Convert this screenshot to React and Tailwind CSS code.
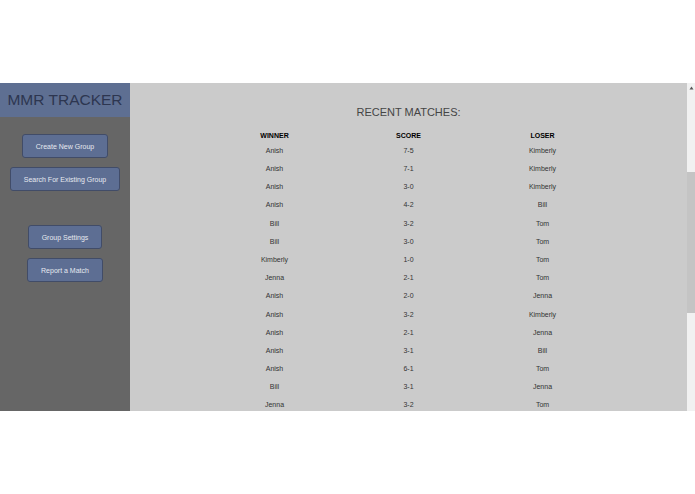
import React from "react";

const rows = [
  ["Anish", "7-5", "Kimberly"],
  ["Anish", "7-1", "Kimberly"],
  ["Anish", "3-0", "Kimberly"],
  ["Anish", "4-2", "Bill"],
  ["Bill", "3-2", "Tom"],
  ["Bill", "3-0", "Tom"],
  ["Kimberly", "1-0", "Tom"],
  ["Jenna", "2-1", "Tom"],
  ["Anish", "2-0", "Jenna"],
  ["Anish", "3-2", "Kimberly"],
  ["Anish", "2-1", "Jenna"],
  ["Anish", "3-1", "Bill"],
  ["Anish", "6-1", "Tom"],
  ["Bill", "3-1", "Jenna"],
  ["Jenna", "3-2", "Tom"],
];

function Btn({ children }) {
  return (
    <button className="h-[24px] px-[13px] rounded-[3px] border border-[#414c68] bg-[#5d6e93] text-[#e6e9f0] text-[7px] leading-none whitespace-nowrap">
      {children}
    </button>
  );
}

export default function App() {
  return (
    <div className="w-[695px] h-[494px] bg-white flex flex-col" style={{ fontFamily: '"Liberation Sans", Arial, sans-serif' }}>
      <div className="h-[83px] shrink-0" />
      <div className="h-[328px] flex shrink-0">
        <div className="w-[130px] shrink-0 bg-[#666666] flex flex-col items-center">
          <div className="w-full h-[34px] bg-[#5e6f92] flex items-center justify-center text-[15.5px] text-[#2d3650] leading-none">
            MMR TRACKER
          </div>
          <div className="mt-[17px] flex flex-col items-center gap-[9px]">
            <Btn>Create New Group</Btn>
            <Btn>Search For Existing Group</Btn>
          </div>
          <div className="mt-[34px] flex flex-col items-center gap-[9px]">
            <Btn>Group Settings</Btn>
            <Btn>Report a Match</Btn>
          </div>
        </div>
        <div className="flex-1 bg-[#cbcbcb] overflow-hidden flex flex-col items-center pt-[24px]">
          <div className="h-[14px] flex items-center text-[11px] text-[#454545] leading-none">RECENT MATCHES:</div>
          <div className="mt-[12px] grid grid-cols-[134px_134px_134px]">
            <div className="h-[12px] flex items-center justify-center text-[7px] font-bold text-black">WINNER</div>
            <div className="h-[12px] flex items-center justify-center text-[7px] font-bold text-black">SCORE</div>
            <div className="h-[12px] flex items-center justify-center text-[7px] font-bold text-black">LOSER</div>
            {rows.map((r, i) => (
              <React.Fragment key={i}>
                {r.map((c, j) => (
                  <div key={j} className="h-[18.2px] flex items-center justify-center text-[7px] text-[#333333]">
                    {c}
                  </div>
                ))}
              </React.Fragment>
            ))}
          </div>
        </div>
        <div className="w-[8px] shrink-0 bg-[#f1f1f1] flex flex-col">
          <div className="h-[89px] flex justify-center pt-[3px]">
            <svg width="5" height="4" viewBox="0 0 5 4">
              <path d="M2.5 0.5 L4.5 3.5 L0.5 3.5 Z" fill="#555" />
            </svg>
          </div>
          <div className="h-[141px] bg-[#c4c4c4]" />
        </div>
      </div>
    </div>
  );
}
